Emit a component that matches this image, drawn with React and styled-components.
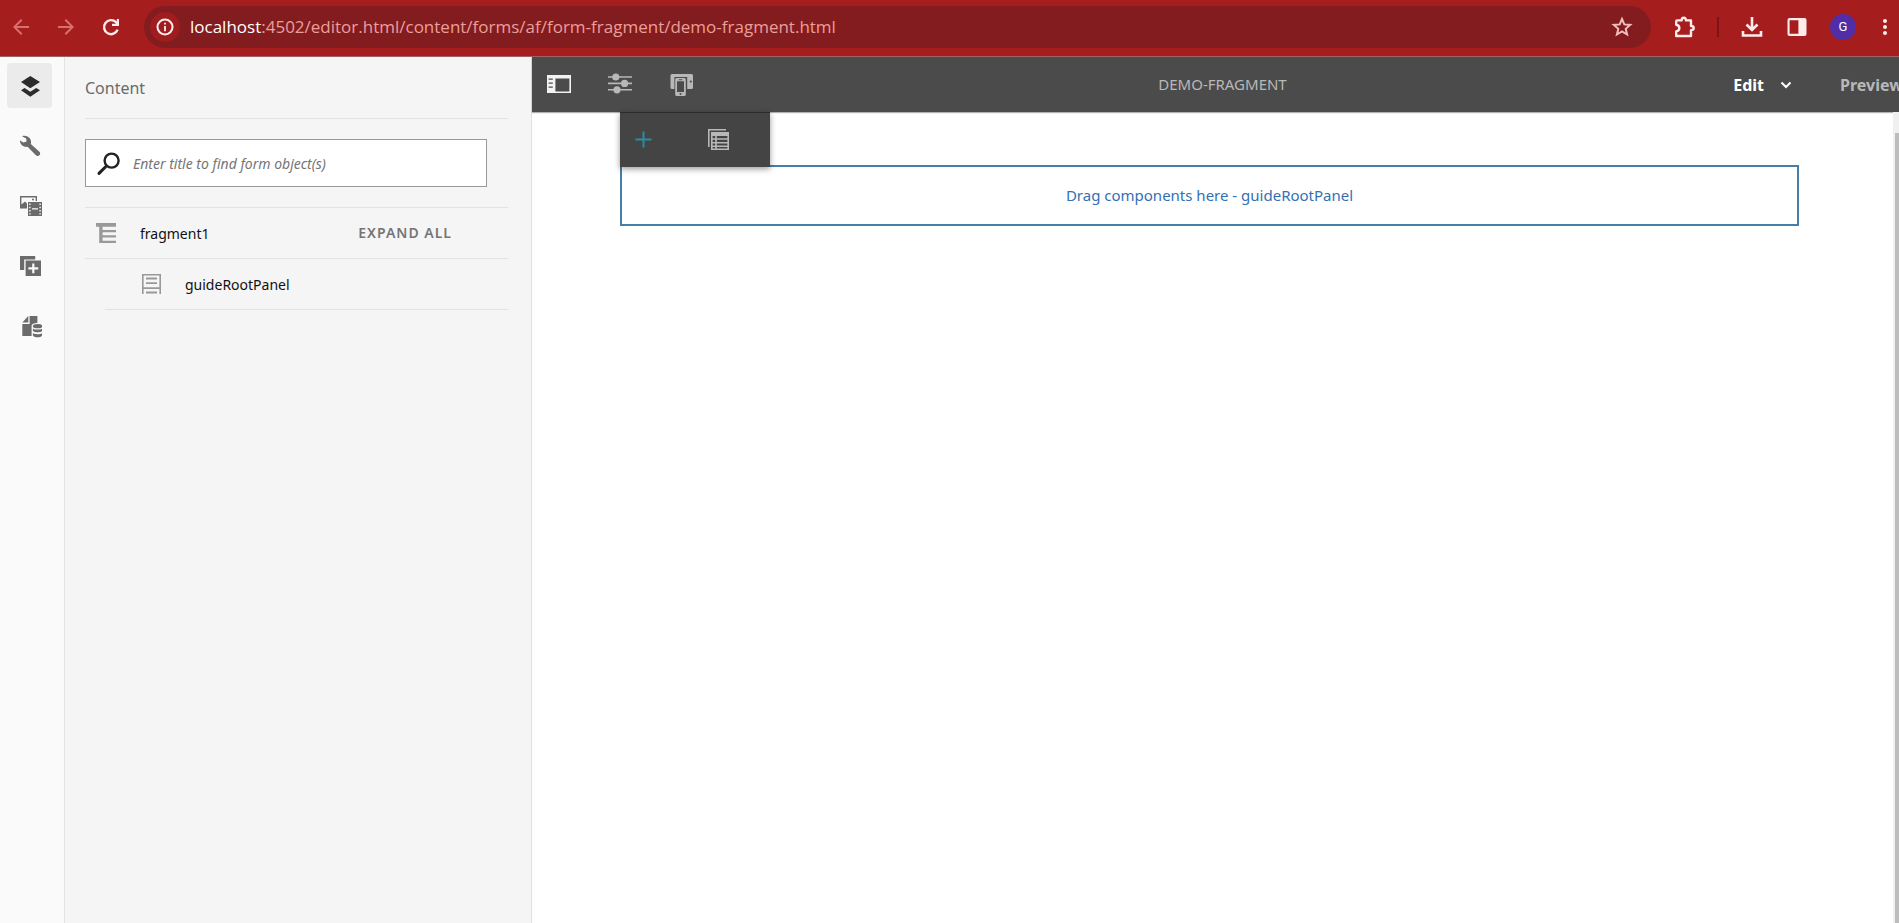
import React from 'react';
import styled, { createGlobalStyle } from 'styled-components';
import { MdArrowBack, MdArrowForward, MdMoreVert } from 'react-icons/md';

function Icon({ children, size = 25 }) {
    return (
        <svg width={size} height={size} viewBox={`0 0 ${size} ${size}`} fill="currentColor" aria-hidden="true">
            {children}
        </svg>
    );
}

const LayersIcon = () => (
    <Icon>
        <path d="M13.3 3 23 9 13.3 15.2 4 9Z" />
        <path d="M4 17.2 7.6 15 13.3 18.7 19.2 15 23 17.2 13.3 23.7Z" />
    </Icon>
);

const WrenchIcon = () => (
    <Icon>
        <path d="M5 3.2C8 2 12 3.5 13.4 6.2 14.2 8 14.2 9.5 13.8 11L22.4 18.8C23.4 19.8 23.4 21.3 22.4 22.3 21.4 23.3 19.9 23.3 18.9 22.3L10.6 13.8C7 14.4 4.2 12.3 3.2 9.5 3 9 3 8.2 3 7.6L6.4 9.6 9.6 8.6 9.2 5.6Z" />
    </Icon>
);

const AssetsIcon = () => (
    <Icon>
        <path d="M3 3H20V8H18.6V4.4H4.4V11.5L8 8.5 10 10.5V15.5H3Z" />
        <circle cx="16" cy="6.4" r="1" />
        <path fillRule="evenodd" d="M11 9H25V23H11ZM12.2 10.5V12H13.6V10.5ZM12.2 13.8V15.2H13.6V13.8ZM12.2 17V18.4H13.6V17ZM12.2 20.2V21.6H13.6V20.2ZM22.4 10.5V12H23.8V10.5ZM22.4 13.8V15.2H23.8V13.8ZM22.4 17V18.4H23.8V17ZM22.4 20.2V21.6H23.8V20.2ZM15 15.2V16.6H21V15.2Z" />
    </Icon>
);

const ComponentsIcon = () => (
    <Icon>
        <path d="M3 3H18.2V6.4H7.2V17H3Z" />
        <path fillRule="evenodd" d="M8.6 7.6H24V23H8.6ZM15.2 10.4V14.2H11.4V16.4H15.2V20.2H17.4V16.4H21.2V14.2H17.4V10.4Z" />
    </Icon>
);

const DataIcon = () => (
    <Icon>
        <path d="M5.3 9.6 11.3 3V9.6Z" />
        <path d="M12.6 3H20.4V10C17 10 14.6 11.2 14.6 13.2V23H5.3V11H12.6Z" />
        <ellipse cx="20.6" cy="13.2" rx="4.7" ry="2.1" />
        <path d="M15.9 15.4C17.6 17 23.6 17 25.3 15.4V18C23.6 19.8 17.6 19.8 15.9 18Z" />
        <path d="M15.9 20C17.6 21.6 23.6 21.6 25.3 20V22.4C23.6 25 17.6 25 15.9 22.4Z" />
    </Icon>
);

const SidePanelIcon = () => (
    <Icon>
        <path fillRule="evenodd" d="M1 3H25V21H1ZM9.4 6.6V19.4H23.4V6.6ZM2.6 6.6V7.7H6.8V6.6ZM2.6 10.6V11.7H6.8V10.6ZM2.6 14.6V15.7H6.8V14.6Z" />
    </Icon>
);

const SlidersIcon = () => (
    <Icon>
        <path d="M1 4.2H25V5.8H1ZM1 10.6H25V12.2H1ZM1 17H25V18.6H1Z" />
        <circle cx="8.8" cy="5" r="3.6" />
        <circle cx="17.6" cy="11.4" r="3.6" />
        <circle cx="10" cy="17.8" r="3.6" />
    </Icon>
);

const DevicesIcon = () => (
    <Icon>
        <path fillRule="evenodd" d="M4 2H23.5Q25 2 25 3.5V15.5Q25 17 23.5 17H19.2V5H6.4V17H4Q2.5 17 2.5 15.5V3.5Q2.5 2 4 2ZM22.8 8.5A1.1 1.1 0 1 0 22.8 10.7 1.1 1.1 0 1 0 22.8 8.5Z" />
        <path fillRule="evenodd" d="M8.7 6H16.3Q17.8 6 17.8 7.5V22.5Q17.8 24 16.3 24H8.7Q7.2 24 7.2 22.5V7.5Q7.2 6 8.7 6ZM9 9.3V20H16V9.3ZM10.8 7.2V8.2H14.2V7.2ZM12.5 21A1 1 0 1 0 12.5 23 1 1 0 1 0 12.5 21Z" />
    </Icon>
);

const PlusIcon = () => (
    <Icon>
        <path d="M11.5 4.5H13.5V11.5H20.5V13.5H13.5V20.5H11.5V13.5H4.5V11.5H11.5Z" />
    </Icon>
);

const TableIcon = () => (
    <Icon>
        <path d="M2 2H20V3.6H3.6V20H2Z" />
        <path fillRule="evenodd" d="M5 5H23V23H5ZM6.6 9V11.2H9.2V9ZM10.8 9V11.2H21.4V9ZM6.6 12.8V15H9.2V12.8ZM10.8 12.8V15H21.4V12.8ZM6.6 16.6V18.4H9.2V16.6ZM10.8 16.6V18.4H21.4V16.6ZM6.6 20V21.4H9.2V20ZM10.8 20V21.4H21.4V20Z" />
    </Icon>
);

const TreeIcon = () => (
    <Icon>
        <path d="M2 2H22V5.8H8.6V9H22V11.2H8.6V14.2H22V16.4H8.6V19.8H22V22H5.2V5.8H2Z" />
    </Icon>
);

const PanelIcon = () => (
    <Icon>
        <path d="M3 2H22V22H20.4V17H4.6V22H3ZM4.6 3.4V15.2H20.4V3.4Z" fillRule="evenodd" />
        <path d="M7 5.6H18V7.4H7ZM7 10.2H18V12H7ZM7 19.6H18V21.4H7Z" />
    </Icon>
);

const SearchIcon = () => (
    <Icon>
        <circle cx="15.6" cy="9.6" r="7" fill="none" stroke="currentColor" strokeWidth="2.4" />
        <path d="M10.4 15 3 22.4" stroke="currentColor" strokeWidth="3" strokeLinecap="round" />
    </Icon>
);

const ChevronIcon = () => (
    <Icon size={12}>
        <path d="M1.5 3.5 6 8 10.5 3.5" fill="none" stroke="currentColor" strokeWidth="2" />
    </Icon>
);

const ReloadIcon = () => (
    <Icon size={24}>
        <path d="M18.6 14.6A7 7 0 1 1 17 7.2L19 9.4" fill="none" stroke="currentColor" strokeWidth="2.4" />
        <path d="M20 4V11H13V8.8H17.8V4Z" />
    </Icon>
);

const InfoIcon = () => (
    <Icon size={24}>
        <circle cx="12" cy="12" r="8.2" fill="none" stroke="currentColor" strokeWidth="2.2" />
        <path d="M11 7.4H13V9.4H11ZM11 11H13V16.6H11Z" />
    </Icon>
);

const StarIcon = () => (
    <Icon size={24}>
        <path d="M12 4 14.3 9.4 20.2 9.9 15.7 13.8 17.1 19.5 12 16.4 6.9 19.5 8.3 13.8 3.8 9.9 9.7 9.4Z" fill="none" stroke="currentColor" strokeWidth="2" />
    </Icon>
);

const ExtensionIcon = () => (
    <Icon size={24}>
        <path d="M5.2 5.4H9.6C9.6 1.8 14 1.8 14 5.4H19V11C22.6 11 22.6 15.2 19 15.2V21H4.2V16.4C8.4 15.6 8.4 10.6 4.2 9.8V6.4Q4.2 5.4 5.2 5.4Z" fill="none" stroke="currentColor" strokeWidth="2.4" strokeLinejoin="round" />
    </Icon>
);

const DownloadIcon = () => (
    <Icon size={24}>
        <path d="M12 2V15M6.5 9.5 12 15 17.5 9.5M3 16V20.5H21V16" fill="none" stroke="currentColor" strokeWidth="2.6" />
    </Icon>
);

const BrowserPanelIcon = () => (
    <Icon size={24}>
        <path fillRule="evenodd" d="M4.5 3H19.5Q21.5 3 21.5 5V19Q21.5 21 19.5 21H4.5Q2.5 21 2.5 19V5Q2.5 3 4.5 3ZM4.6 5.2V18.8H13.4V5.2Z" />
    </Icon>
);

const railItems = [
    { label: 'Content tree', icon: <LayersIcon />, active: true },
    { label: 'Properties', icon: <WrenchIcon /> },
    { label: 'Assets', icon: <AssetsIcon /> },
    { label: 'Components', icon: <ComponentsIcon /> },
    { label: 'Data sources', icon: <DataIcon /> },
];

function App() {
    return (
        <Page>
            <GlobalStyle />
            <BrowserBar>
                <BrowserButton $dim aria-label="Back"><MdArrowBack /></BrowserButton>
                <BrowserButton $dim aria-label="Forward"><MdArrowForward /></BrowserButton>
                <BrowserButton aria-label="Reload"><ReloadIcon /></BrowserButton>
                <AddressBar>
                    <SiteInfo aria-label="Site information"><InfoIcon /></SiteInfo>
                    <Address>
                        <b>localhost</b>:4502/editor.html/content/forms/af/form-fragment/demo-fragment.html
                    </Address>
                    <BrowserButton $soft aria-label="Bookmark"><StarIcon /></BrowserButton>
                </AddressBar>
                <BrowserButton aria-label="Extensions"><ExtensionIcon /></BrowserButton>
                <Separator />
                <BrowserButton aria-label="Downloads"><DownloadIcon /></BrowserButton>
                <BrowserButton aria-label="Side panel"><BrowserPanelIcon /></BrowserButton>
                <Avatar aria-label="Profile">G</Avatar>
                <MenuButton aria-label="Menu"><MdMoreVert /></MenuButton>
            </BrowserBar>

            <Editor>
                <Rail>
                    {railItems.map(item => (
                        <RailButton key={item.label} $active={item.active} aria-label={item.label}>
                            {item.icon}
                        </RailButton>
                    ))}
                </Rail>

                <SidePanel>
                    <PanelTitle>Content</PanelTitle>
                    <SearchArea>
                        <SearchBox>
                            <SearchIcon />
                            <SearchInput type="text" aria-label="Find form object" placeholder="Enter title to find form object(s)" />
                        </SearchBox>
                    </SearchArea>
                    <Tree>
                        <TreeRow>
                            <TreeIcon />
                            <TreeLabel>fragment1</TreeLabel>
                            <ExpandButton>EXPAND ALL</ExpandButton>
                        </TreeRow>
                        <TreeRow $nested>
                            <PanelIcon />
                            <TreeLabel>guideRootPanel</TreeLabel>
                        </TreeRow>
                    </Tree>
                </SidePanel>

                <Main>
                    <Toolbar>
                        <ToolGroup>
                            <ToolButton $active aria-label="Toggle side panel"><SidePanelIcon /></ToolButton>
                            <ToolButton aria-label="Page information"><SlidersIcon /></ToolButton>
                            <ToolButton aria-label="Emulator"><DevicesIcon /></ToolButton>
                        </ToolGroup>
                        <DocTitle>DEMO-FRAGMENT</DocTitle>
                        <ModeGroup>
                            <ModeButton $active>Edit <ChevronIcon /></ModeButton>
                            <PreviewButton>Preview</PreviewButton>
                        </ModeGroup>
                    </Toolbar>
                    <Canvas>
                        <Form>
                            <DropZone>Drag components here - guideRootPanel</DropZone>
                            <FloatingBar>
                                <FloatingButton $accent aria-label="Add component"><PlusIcon /></FloatingButton>
                                <FloatingButton aria-label="Manage panel"><TableIcon /></FloatingButton>
                            </FloatingBar>
                        </Form>
                        <ScrollTrack>
                            <ScrollThumb />
                        </ScrollTrack>
                    </Canvas>
                </Main>
            </Editor>
        </Page>
    );
}

const GlobalStyle = createGlobalStyle`
  *, *::before, *::after {
    box-sizing: border-box;
  }

  html, body, #root {
    margin: 0;
    width: 100%;
    height: 100%;
    overflow: hidden;
  }

  body, button, input {
    font-family: "Noto Sans", "Open Sans", sans-serif;
  }

  button {
    padding: 0;
    border: 0;
    background: none;
    color: inherit;
    cursor: pointer;
  }

  svg {
    display: block;
    flex: none;
  }
`;

const Page = styled.div`
    display: flex;
    flex-direction: column;
    height: 100vh;
    background: #fff;
`;

/* browser chrome */

const BrowserBar = styled.header`
    display: flex;
    align-items: center;
    gap: 21px;
    height: 57px;
    padding: 0 6px 2px 9px;
    background: #a61d1e;
    border-bottom: 1px solid #a06262;
    color: #fdeceb;
`;

const BrowserButton = styled.button`
    width: 24px;
    height: 24px;
    flex: none;
    color: ${props => (props.$dim ? '#d9706e' : props.$soft ? '#f0bdba' : '#fdeceb')};

    svg { width: 24px; height: 24px; }
`;

const MenuButton = styled(BrowserButton)`
    display: flex;
    justify-content: center;
    width: 16px;
`;

const AddressBar = styled.div`
    flex: 1;
    min-width: 0;
    display: flex;
    align-items: center;
    gap: 10px;
    height: 42px;
    padding: 0 17px 0 6px;
    border-radius: 21px;
    background: #831c1e;
`;

const SiteInfo = styled.button`
    display: flex;
    align-items: center;
    justify-content: center;
    width: 30px;
    height: 30px;
    border-radius: 50%;
    background: #a01d1f;

    svg { width: 22px; height: 22px; }
`;

const Address = styled.div`
    flex: 1;
    min-width: 0;
    overflow: hidden;
    white-space: nowrap;
    font-family: "Open Sans", "Noto Sans", sans-serif;
    font-size: 17px;
    line-height: 26px;
    color: #eb9f9b;

    b {
        font-weight: 400;
        color: #fff;
    }
`;

const Separator = styled.span`
    width: 2px;
    height: 20px;
    background: #7d1316;
`;

const Avatar = styled.button`
    width: 26px;
    height: 26px;
    flex: none;
    border-radius: 50%;
    background: #512da8;
    color: #fff;
    font-family: Roboto, sans-serif;
    font-size: 13px;
    line-height: 26px;
`;

/* editor */

const Editor = styled.div`
    flex: 1;
    display: flex;
    min-height: 0;
`;

const Rail = styled.nav`
    display: flex;
    flex-direction: column;
    gap: 15px;
    width: 65px;
    flex: none;
    padding: 6px 0 0 7px;
    border-right: 1px solid #e3e3e3;
    background: #fafafa;
`;

const RailButton = styled.button`
    display: flex;
    align-items: center;
    justify-content: center;
    width: 45px;
    height: 45px;
    border-radius: 4px;
    background: ${props => (props.$active ? '#ebebeb' : 'transparent')};
    color: ${props => (props.$active ? '#2c2c2c' : '#6b6b6b')};
`;

const SidePanel = styled.aside`
    width: 467px;
    flex: none;
    padding: 0 23px 0 20px;
    border-right: 1px solid #e0e0e0;
    background: #f5f5f5;
`;

const PanelTitle = styled.h1`
    margin: 0;
    padding-top: 19px;
    height: 62px;
    border-bottom: 1px solid #e2e2e2;
    font-size: 16px;
    line-height: 24px;
    font-weight: 400;
    color: #6b6b6b;
`;

const SearchArea = styled.div`
    padding: 20px 21px 20px 0;
    border-bottom: 1px solid #e2e2e2;
`;

const SearchBox = styled.label`
    display: flex;
    align-items: center;
    gap: 12px;
    height: 48px;
    padding: 0 10px;
    border: 1px solid #999;
    background: #fff;
    color: #222;
`;

const SearchInput = styled.input`
    flex: 1;
    min-width: 0;
    padding: 2px 0 0;
    border: 0;
    outline: 0;
    background: none;
    font-size: 14px;
    line-height: 20px;

    &::placeholder {
        color: #757575;
        font-style: italic;
    }
`;

const Tree = styled.div`
    display: flex;
    flex-direction: column;
`;

const TreeRow = styled.div`
    display: flex;
    align-items: center;
    gap: 21px;
    height: 51px;
    margin-left: ${props => (props.$nested ? 20 : 0)}px;
    padding: 0 56px 0 ${props => (props.$nested ? 34 : 9)}px;
    border-bottom: 1px solid #e2e2e2;
    font-size: 14px;
    line-height: 20px;
    color: #111;

    svg { color: #999; }
`;

const TreeLabel = styled.span`
    padding-top: 2px;
`;

const ExpandButton = styled.button`
    margin-left: auto;
    font-size: 14px;
    line-height: 20px;
    font-weight: 600;
    letter-spacing: 1px;
    color: #757575;
`;

const Main = styled.main`
    flex: 1;
    min-width: 0;
    display: flex;
    flex-direction: column;
`;

const Toolbar = styled.div`
    display: grid;
    grid-template-columns: 1fr auto 1fr;
    align-items: center;
    height: 55px;
    flex: none;
    padding-left: 14px;
    background: #4b4b4b;
    box-shadow: 0 1px 1px rgba(0, 0, 0, 0.3);
    color: #b8b8b8;
`;

const ToolGroup = styled.div`
    display: flex;
    gap: 36px;
`;

const ToolButton = styled.button`
    color: ${props => (props.$active ? '#f2f2f2' : '#b8b8b8')};
`;

const DocTitle = styled.h2`
    margin: 0;
    padding-bottom: 2px;
    font-size: 15px;
    line-height: 20px;
    font-weight: 400;
`;

const ModeGroup = styled.div`
    display: flex;
    justify-content: flex-end;
    gap: 48px;
`;

const ModeButton = styled.button`
    display: flex;
    align-items: center;
    gap: 16px;
    font-size: 16px;
    line-height: 24px;
    font-weight: 700;
    color: ${props => (props.$active ? '#fff' : '#b8b8b8')};
`;

/* runs past the right edge of the toolbar */
const PreviewButton = styled(ModeButton)`
    width: 59px;
    overflow: hidden;
`;

const Canvas = styled.div`
    flex: 1;
    display: flex;
    min-height: 0;
`;

const Form = styled.div`
    flex: 1;
    position: relative;
    padding: 53px 94px 0 88px;
`;

const DropZone = styled.div`
    display: flex;
    align-items: center;
    justify-content: center;
    height: 61px;
    padding-bottom: 2px;
    border: 2px solid #437fa8;
    font-size: 15px;
    line-height: 24px;
    color: #3470b4;
`;

const FloatingBar = styled.div`
    position: absolute;
    top: 0;
    left: 88px;
    display: flex;
    align-items: center;
    gap: 50px;
    width: 150px;
    height: 55px;
    padding: 0 0 2px 11px;
    border-top: 1px solid #2c2c2c;
    background: #444;
    box-shadow: 0 2px 6px rgba(0, 0, 0, 0.4);
`;

const FloatingButton = styled.button`
    color: ${props => (props.$accent ? '#2c8ca0' : '#b8b8b8')};
`;

const ScrollTrack = styled.div`
    width: 6px;
    padding: 21px 0 0 2px;
    background: #f0f0f0;
`;

const ScrollThumb = styled.div`
    height: 100%;
    background: #bdbdbd;
`;

export default App;
